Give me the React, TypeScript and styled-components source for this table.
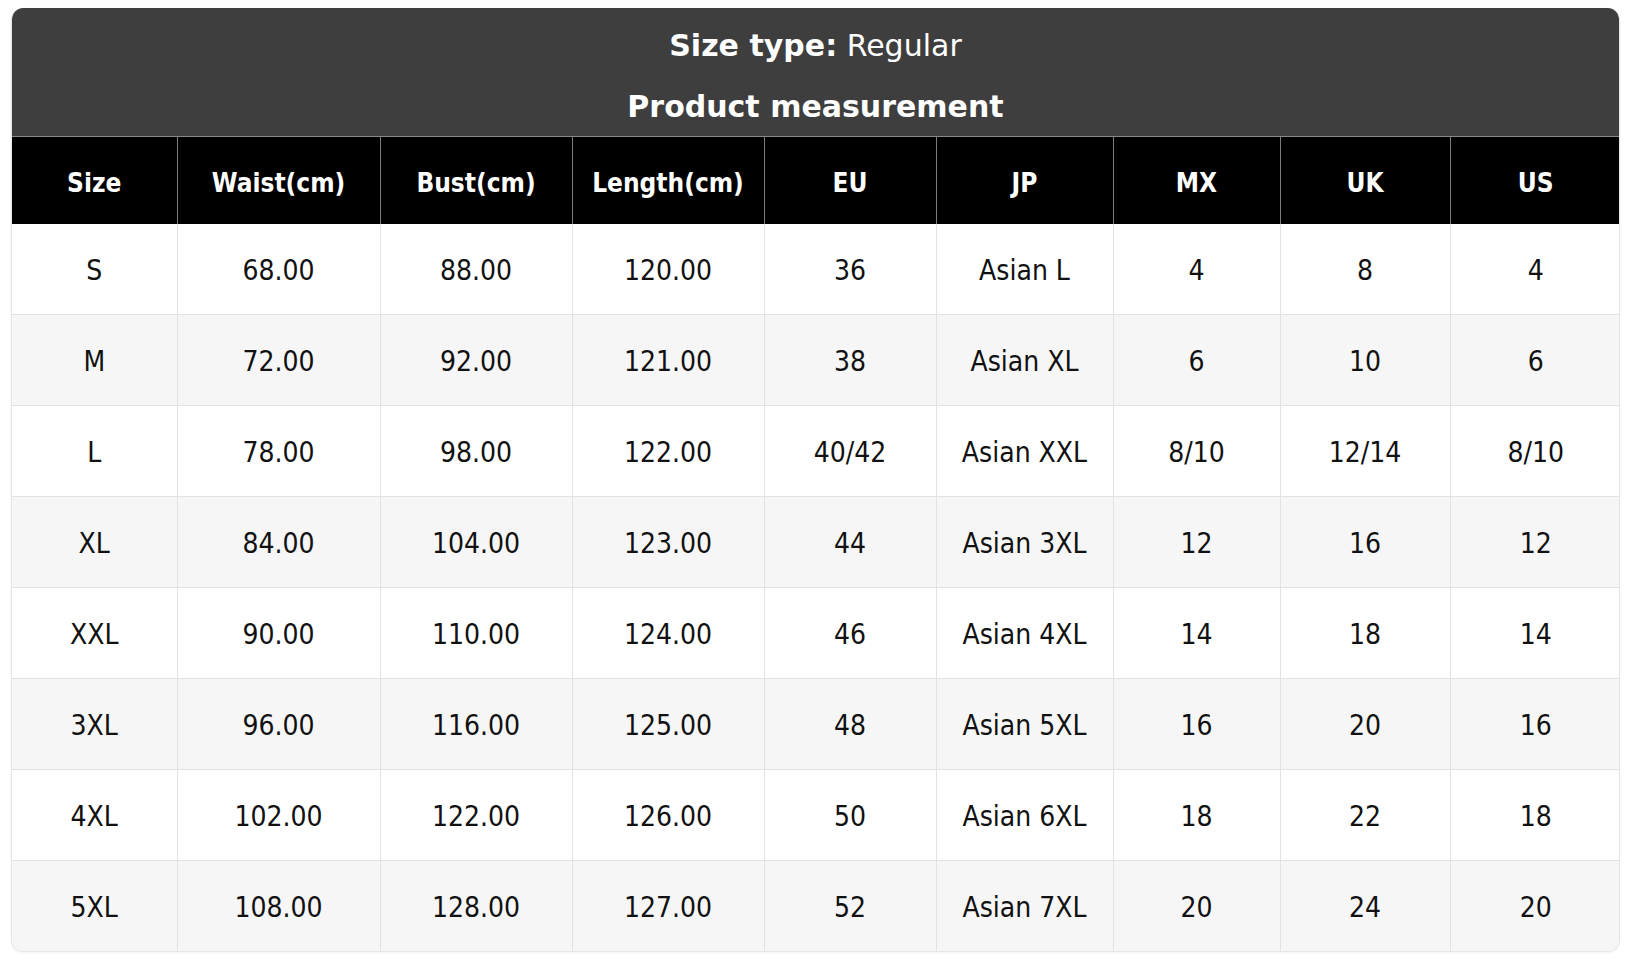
import React from "react";
import styled, { createGlobalStyle } from "styled-components";

const GlobalStyle = createGlobalStyle`
  html, body {
    margin: 0;
    padding: 0;
    background: #ffffff;
    font-family: "DejaVu Sans", sans-serif;
  }
`;

const columns = [
  { label: "Size", width: 165 },
  { label: "Waist(cm)", width: 203 },
  { label: "Bust(cm)", width: 192 },
  { label: "Length(cm)", width: 192 },
  { label: "EU", width: 172 },
  { label: "JP", width: 177 },
  { label: "MX", width: 167 },
  { label: "UK", width: 170 },
  { label: "US", width: 171 },
];

const rows = [
  ["S", "68.00", "88.00", "120.00", "36", "Asian L", "4", "8", "4"],
  ["M", "72.00", "92.00", "121.00", "38", "Asian XL", "6", "10", "6"],
  ["L", "78.00", "98.00", "122.00", "40/42", "Asian XXL", "8/10", "12/14", "8/10"],
  ["XL", "84.00", "104.00", "123.00", "44", "Asian 3XL", "12", "16", "12"],
  ["XXL", "90.00", "110.00", "124.00", "46", "Asian 4XL", "14", "18", "14"],
  ["3XL", "96.00", "116.00", "125.00", "48", "Asian 5XL", "16", "20", "16"],
  ["4XL", "102.00", "122.00", "126.00", "50", "Asian 6XL", "18", "22", "18"],
  ["5XL", "108.00", "128.00", "127.00", "52", "Asian 7XL", "20", "24", "20"],
];

const App = () => {
  return (
    <Page>
      <GlobalStyle />
      <Card>
        <TitleBar>
          <TitleLine>
            <strong>Size type:</strong> Regular
          </TitleLine>
          <TitleLine>
            <strong>Product measurement</strong>
          </TitleLine>
        </TitleBar>
        <Table>
          <colgroup>
            {columns.map((c) => (
              <col key={c.label} style={{ width: c.width }} />
            ))}
          </colgroup>
          <thead>
            <tr>
              {columns.map((c) => (
                <HeadCell key={c.label}>{c.label}</HeadCell>
              ))}
            </tr>
          </thead>
          <tbody>
            {rows.map((row, i) => (
              <Row key={row[0]} striped={i % 2 === 1}>
                {row.map((value, j) => (
                  <Cell key={j}>{value}</Cell>
                ))}
              </Row>
            ))}
          </tbody>
        </Table>
      </Card>
    </Page>
  );
};

export default App;

const Page = styled.div`
  padding: 8px 7px 17px 11px;
`;

const Card = styled.div`
  width: 1609px;
  border-radius: 12px;
  overflow: hidden;
  border: 1px solid #e6e6e6;
  border-top: none;
  box-sizing: border-box;
  box-shadow: 0 1px 3px rgba(0, 0, 0, 0.06);
`;

const TitleBar = styled.div`
  height: 129px;
  background: #3e3e3e;
  color: #ffffff;
  display: flex;
  flex-direction: column;
  align-items: center;
  justify-content: center;
  gap: 23px;
  border-bottom: 1px solid #8a8a8a;
  box-sizing: border-box;
  padding-top: 9px;
`;

const TitleLine = styled.div`
  font-family: "DejaVu Sans", sans-serif;
  font-size: 30px;
  line-height: 38px;
  font-weight: 400;

  strong {
    font-weight: 700;
  }
`;

const Table = styled.table`
  width: 100%;
  table-layout: fixed;
  border-collapse: collapse;
`;

const HeadCell = styled.th`
  height: 83px;
  padding: 4px 0 0;
  background: #000000;
  color: #ffffff;
  font-family: "DejaVu Sans Condensed", "DejaVu Sans", sans-serif;
  font-stretch: condensed;
  font-size: 26px;
  font-weight: 700;
  text-align: center;
  border-left: 1px solid #7a7a7a;

  &:first-child {
    border-left: none;
  }
`;

const Row = styled.tr<{ striped: boolean }>`
  background: ${(p) => (p.striped ? "#f6f6f6" : "#ffffff")};
  border-top: 1px solid #e2e2e2;

  &:first-child {
    border-top: none;
  }
`;

const Cell = styled.td`
  height: 88px;
  padding: 2px 0 0;
  text-align: center;
  font-family: "DejaVu Sans Condensed", "DejaVu Sans", sans-serif;
  font-stretch: condensed;
  font-size: 28px;
  color: #111111;
  border-left: 1px solid #e2e2e2;

  &:first-child {
    border-left: none;
  }
`;
